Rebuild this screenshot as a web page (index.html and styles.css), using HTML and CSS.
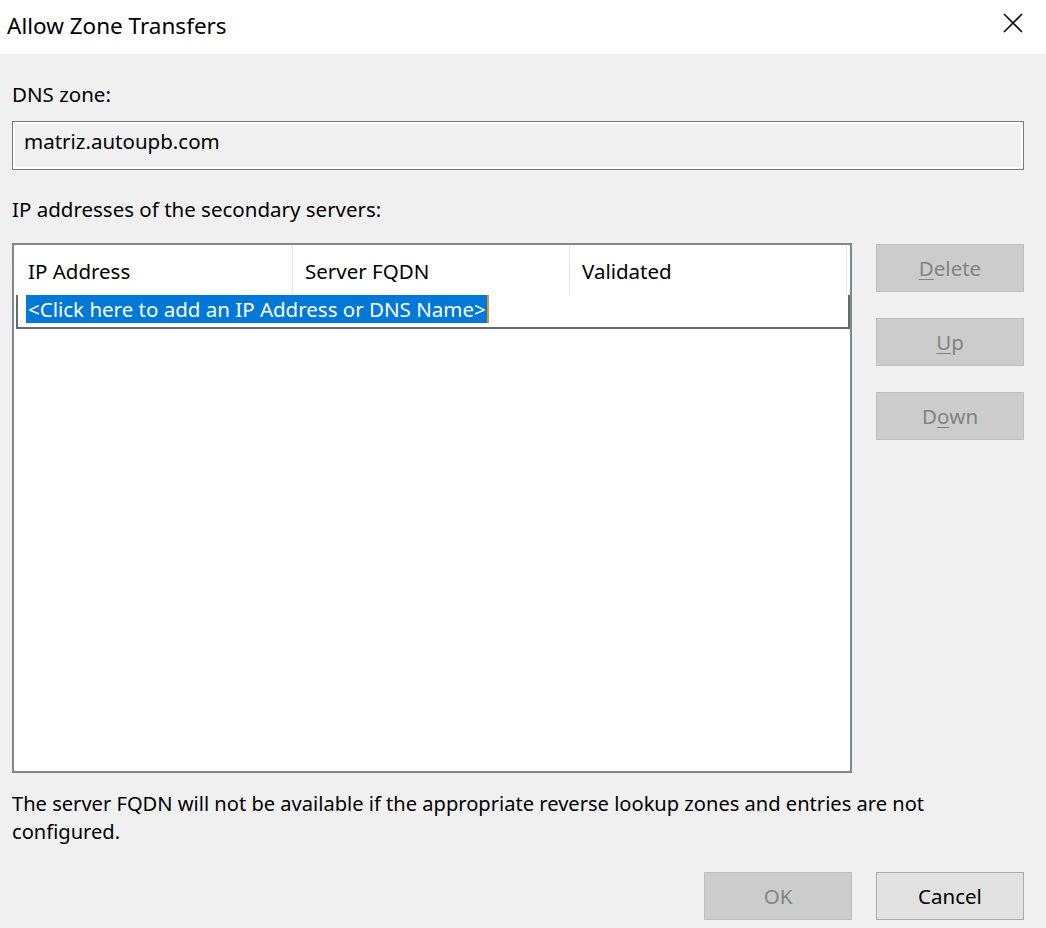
FILE: index.html
```html
<!DOCTYPE html>
<html>
<head>
<meta charset="utf-8">
<link rel="stylesheet" href="styles.css">
</head>
<body>
<div class="dialog">
  <div class="titlebar">
    <span class="title">Allow Zone Transfers</span>
    <svg class="close" width="20" height="20" viewBox="0 0 20 20"><path d="M1 1L19 19M19 1L1 19" stroke="#111" stroke-width="1.6" fill="none"/></svg>
  </div>
  <div class="content">
    <div class="label">DNS zone:</div>
    <div class="zonebox">matriz.autoupb.com</div>
    <div class="label label2">IP addresses of the secondary servers:</div>
    <div class="listrow">
      <div class="list">
        <div class="header">
          <div class="col c1">IP Address</div>
          <div class="col c2">Server FQDN</div>
          <div class="col c3">Validated</div>
        </div>
        <div class="editrow"><span class="sel">&lt;Click here to add an IP Address or DNS Name&gt;</span><span class="caret"></span></div>
      </div>
      <div class="sidebtns">
        <div class="btn disabled"><u>D</u>elete</div>
        <div class="btn disabled"><u>U</u>p</div>
        <div class="btn disabled">D<u>o</u>wn</div>
      </div>
    </div>
    <p class="note">The server FQDN will not be available if the appropriate reverse lookup zones and entries are not configured.</p>
    <div class="footer">
      <div class="btn disabled">OK</div>
      <div class="btn normal">Cancel</div>
    </div>
  </div>
</div>
</body>
</html>
```
FILE: styles.css
```css
html, body {
  margin: 0;
  padding: 0;
}
body {
  width: 1046px;
  height: 928px;
  overflow: hidden;
  background: #f0f0f0;
  font-family: "Noto Sans", "Open Sans", sans-serif;
  font-size: 20.5px;
  color: #000;
}
.dialog {
  display: flex;
  flex-direction: column;
  height: 928px;
}
.titlebar {
  height: 54px;
  background: #fff;
  display: flex;
  align-items: center;
  justify-content: space-between;
  padding: 0 23px 0 7px;
  box-sizing: border-box;
}
.title {
  font-size: 22.5px;
  margin-top: -3px;
}
.close {
  margin-top: -8px;
}
.content {
  padding: 0 22px 0 12px;
  display: flex;
  flex-direction: column;
}
.label {
  margin-top: 26px;
  line-height: 28px;
}
.label2 {
  margin-top: 25px;
}
.zonebox {
  margin-top: 13px;
  height: 49px;
  box-sizing: border-box;
  border: 1px solid #7a7a7a;
  box-shadow: inset 0 0 0 2px #fff;
  padding: 5px 11px;
  line-height: 28px;
}
.listrow {
  margin-top: 20px;
  display: flex;
  gap: 24px;
  align-items: flex-start;
}
.list {
  width: 840px;
  height: 530px;
  box-sizing: border-box;
  border: 2px solid #828790;
  background: #fff;
  display: flex;
  flex-direction: column;
  padding: 0 2px;
}
.header {
  display: flex;
  height: 50px;
}
.col {
  box-sizing: border-box;
  border-right: 1px solid #e5e5e5;
  padding: 12px 0 0 12px;
  line-height: 28px;
}
.c1 { width: 277px; }
.c2 { width: 277px; }
.c3 { width: 277px; }
.editrow {
  height: 34px;
  width: 834px;
  box-sizing: border-box;
  border: 2px solid #6a6a6a;
  border-top: none;
  display: flex;
  align-items: flex-start;
  padding-left: 8px;
}
.sel {
  background: #0078d7;
  color: #fff;
  line-height: 28px;
  height: 28px;
  padding: 0 1px 0 2px;
}
.caret {
  width: 2px;
  height: 28px;
  background: #e8902c;
}
.sidebtns {
  display: flex;
  flex-direction: column;
  gap: 26px;
  padding-top: 1px;
}
.btn {
  width: 148px;
  height: 48px;
  box-sizing: border-box;
  display: flex;
  align-items: center;
  justify-content: center;
  line-height: 28px;
}
.btn u {
  text-decoration-thickness: 1px;
  text-underline-offset: 3px;
}
.disabled {
  background: #cccccc;
  border: 1px solid #bfbfbf;
  color: #838383;
}
.normal {
  background: #e1e1e1;
  border: 1px solid #adadad;
  color: #000;
}
.note {
  margin: 17px 0 0 0;
  line-height: 28px;
  font-size: 20.1px;
}
.footer {
  margin-top: 26px;
  display: flex;
  justify-content: flex-end;
  gap: 24px;
}
```
